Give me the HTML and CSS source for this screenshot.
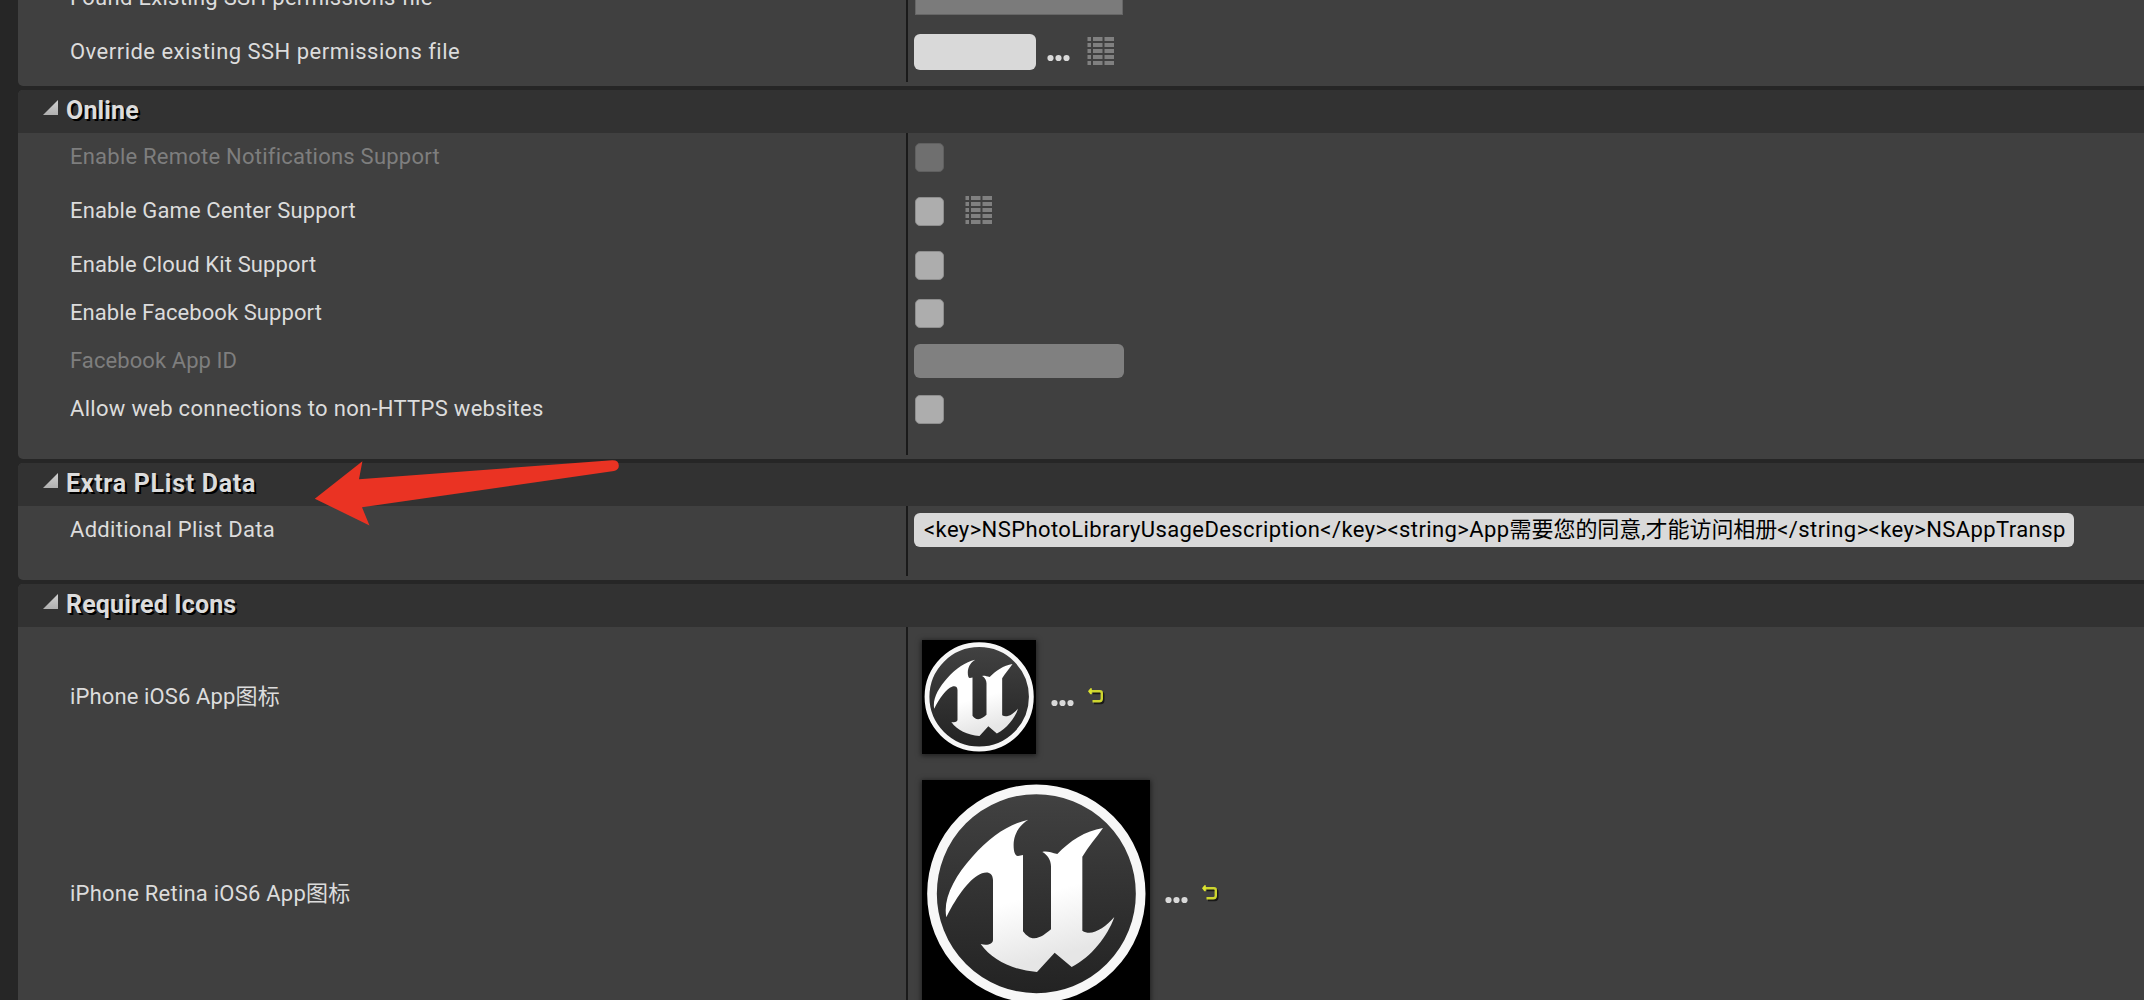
FILE: index.html
```html
<!DOCTYPE html>
<html lang="zh-CN">
<head>
<meta charset="utf-8">
<title>Project Settings - iOS</title>
<link rel="stylesheet" href="styles.css">
</head>
<body>
<svg class="defs" width="0" height="0" aria-hidden="true">
  <defs>
    <linearGradient id="disc" x1="0" y1="0" x2="0" y2="1"><stop offset="0" stop-color="#424242"/><stop offset="1" stop-color="#222"/></linearGradient>
    <linearGradient id="metal" x1="0" y1="0" x2="0.3" y2="1"><stop offset="0.6" stop-color="#fff"/><stop offset="1" stop-color="#e6e6e6"/></linearGradient>
    <linearGradient id="tri" x1="0" y1="0" x2="0" y2="1"><stop offset="0" stop-color="#d0d0d0"/><stop offset="1" stop-color="#b0b0b0"/></linearGradient>
  </defs>
  <symbol id="unreal" viewBox="0 0 684 684">
    <rect width="684" height="684" fill="#000"/>
    <circle cx="343" cy="341" r="313" fill="url(#disc)" stroke="#f7f7f7" stroke-width="29"/>
    <path fill="url(#metal)" d="M319 119C282 142 276 174 275 190C274 210 278 229 288 228L303 225V454C313 467 322 475 337 475C356 474 370 462 387 448V259C387 240 376 224 361 216C373 212 388 218 406 222C443 183 489 153 543 144C524 172 500 198 481 230V452C508 470 546 446 577 411C556 470 508 531 449 561L398 518L345 576C272 570 211 541 176 492C196 497 213 492 213 479V300C212 278 197 274 180 280C146 292 106 346 73 412C62 354 99 288 151 230C207 168 260 133 319 119Z"/>
  </symbol>
  <symbol id="list" viewBox="0 0 28 30">
    <g fill="#808080">
      <path d="M.5 1h3.5v4H.5zM6 1h9.5v4H6zM17.5 1H27v4h-9.5z"/>
      <path d="M.5 7h3.5v4H.5zM6 7h9.5v4H6zM17.5 7H27v4h-9.5z"/>
      <path d="M.5 13h3.5v4H.5zM6 13h9.5v4H6zM17.5 13H27v4h-9.5z"/>
      <path d="M.5 19h3.5v4H.5zM6 19h9.5v4H6zM17.5 19H27v4h-9.5z"/>
      <path d="M.5 25h3.5v4H.5zM6 25h9.5v4H6zM17.5 25H27v4h-9.5z"/>
    </g>
  </symbol>
  <symbol id="dots" viewBox="0 0 24 8">
    <g fill="#d9d9d9"><circle cx="3.5" cy="4" r="3.1"/><circle cx="11.5" cy="4" r="3.1"/><circle cx="19.5" cy="4" r="3.1"/></g>
  </symbol>
  <symbol id="reset" viewBox="0 0 18 18">
    <g fill="none" stroke-width="2.4"><path stroke="#181818" d="M5 5h8.5q1.8 0 1.8 2v5.5q0 2.5-2.5 2.5H6"/><path stroke="#cdd52f" d="M2 3.2h10q1.8 0 1.8 2v5.6q0 2.5-2.5 2.5H4.5"/></g>
    <path fill="#dde52f" d="M0 3.2L2.4.2h1.4v6H2.4z"/>
  </symbol>
  <symbol id="expanded" viewBox="0 0 16 16"><path fill="url(#tri)" d="M15 0v15H0z"/></symbol>
</svg>

<main class="panel">
  <section class="group">
    <div class="body tight">
      <div class="row"><span class="label">Found Existing SSH permissions file</span><div class="value"><span class="readonly"></span></div></div>
      <div class="row tall"><span class="label wide">Override existing SSH permissions file</span><div class="value"><span class="field path"></span><svg class="dots"><use href="#dots"/></svg><svg class="list"><use href="#list"/></svg></div></div>
    </div>
  </section>

  <section class="group">
    <h2 class="head"><svg class="tri"><use href="#expanded"/></svg><span class="title">Online</span></h2>
    <div class="body">
      <div class="row disabled"><span class="label snug">Enable Remote Notifications Support</span><div class="value"><span class="check"></span></div></div>
      <div class="row tall"><span class="label tighter">Enable Game Center Support</span><div class="value"><span class="check"></span><svg class="list near"><use href="#list"/></svg></div></div>
      <div class="row"><span class="label tighter">Enable Cloud Kit Support</span><div class="value"><span class="check"></span></div></div>
      <div class="row"><span class="label tightest">Enable Facebook Support</span><div class="value"><span class="check"></span></div></div>
      <div class="row disabled"><span class="label tightest">Facebook App ID</span><div class="value"><span class="field appid"></span></div></div>
      <div class="row"><span class="label">Allow web connections to non-HTTPS websites</span><div class="value"><span class="check"></span></div></div>
    </div>
  </section>

  <section class="group">
    <h2 class="head"><svg class="tri"><use href="#expanded"/></svg><span class="title spaced">Extra PList Data</span></h2>
    <div class="body">
      <div class="row"><span class="label">Additional Plist Data</span><div class="value"><span class="field plist">&lt;key&gt;NSPhotoLibraryUsageDescription&lt;/key&gt;&lt;string&gt;App<span class="han">需要您的同意,才能访问相册</span>&lt;/string&gt;&lt;key&gt;NSAppTransp</span></div></div>
    </div>
  </section>

  <section class="group">
    <h2 class="head"><svg class="tri"><use href="#expanded"/></svg><span class="title">Required Icons</span></h2>
    <div class="body">
      <div class="row icon-small"><span class="label tighter">iPhone iOS6 App图标</span><div class="value"><svg class="thumb"><use href="#unreal"/></svg><svg class="dots"><use href="#dots"/></svg><svg class="reset"><use href="#reset"/></svg></div></div>
      <div class="row icon-large"><span class="label snug">iPhone Retina iOS6 App图标</span><div class="value"><svg class="thumb"><use href="#unreal"/></svg><svg class="dots"><use href="#dots"/></svg><svg class="reset"><use href="#reset"/></svg></div></div>
    </div>
  </section>
</main>

<svg class="arrow" viewBox="314 458 308 70"><path fill="#ea3323" d="M314.8 498.7L362.4 461.3L359 479.3L612 460.3Q618.7 460 618.8 465.5Q619 470 614 470.9L362 507.3L369.5 525.5Z"/></svg>
</body>
</html>
```
FILE: styles.css
```css
* { box-sizing: border-box; }

body {
  margin: 0;
  height: 1000px;
  overflow: hidden;
  background: #262626;
  color: #dcdcdc;
  font-family: Roboto, "Noto Sans CJK SC", sans-serif;
  font-size: 22px;
  letter-spacing: 0.3px;
}

svg { display: block; flex: none; }
.defs { position: absolute; }

.panel {
  display: flex;
  flex-direction: column;
  gap: 4px;
  margin: -26px 0 0 18px;
}

.group {
  flex: none;
  background: #404040;
  border-radius: 5px 0 0 5px;
  overflow: hidden;
}

.head {
  display: flex;
  align-items: center;
  height: 43px;
  margin: 0;
  padding-left: 25px;
  background: #323232;
  font-size: 25px;
  font-weight: 700;
  letter-spacing: 0.15px;
  text-shadow: 2px 2px 0 #000;
}

.title { margin: -1px 0 0 7px; line-height: 32px; }
.title.spaced { letter-spacing: 0.7px; }
.tri { width: 16px; height: 16px; margin-top: -7px; }

.body {
  padding-bottom: 4px;
  background: linear-gradient(#1a1a1a, #1a1a1a) 888px 0 / 2px calc(100% - 4px) no-repeat;
}
.body::after { content: ""; display: block; height: 22px; }
.body.tight::after { display: none; }

.row {
  display: grid;
  grid-template-columns: 890px 1fr;
  align-items: center;
  height: 48px;
}
.row.tall { height: 60px; }
.row.icon-small { height: 140px; }
.row.icon-large { height: 254px; }

.label {
  padding-left: 52px;
  line-height: 30px;
  white-space: nowrap;
}
.label.wide { letter-spacing: 0.48px; }
.label.snug { letter-spacing: 0.23px; }
.label.tighter { letter-spacing: 0.13px; }
.label.tightest { letter-spacing: 0.08px; }
.disabled .label { color: #7e7e7e; }

.value { display: flex; align-items: center; padding-left: 6px; }

.check {
  width: 29px;
  height: 29px;
  margin-left: 1px;
  border: 1px solid #8e8e8e;
  border-radius: 5px;
  background: #adadad;
}
.disabled .check { background: #6f6f6f; border-color: #606060; }

.field {
  height: 34px;
  border-radius: 6px;
  background: #d9d9d9;
}
.field.path { width: 122px; height: 36px; }
.field.appid { width: 210px; background: #808080; }
.field.plist {
  width: 1160px;
  padding-left: 10px;
  color: #000;
  letter-spacing: 0.41px;
  line-height: 34px;
  white-space: nowrap;
  overflow: hidden;
}
.han { letter-spacing: -0.05px; }
.readonly { width: 208px; height: 33px; margin-left: 1px; background: #7b7b7b; border: 1px solid #666; }

.dots { width: 24px; height: 8px; margin: 12px 0 0 11px; }
.list { width: 28px; height: 30px; margin: -2px 0 0 16px; }
.list.near { margin-left: 21px; }

.thumb { width: 114px; height: 114px; margin-left: 8px; box-shadow: 0 1px 5px 1px rgba(0, 0, 0, 0.5); }
.icon-large .thumb { width: 228px; height: 228px; }
.thumb + .dots { margin-left: 15px; }
.reset { width: 18px; height: 18px; margin: -1px 0 0 13px; }

.arrow {
  position: absolute;
  left: 314px;
  top: 458px;
  width: 308px;
  height: 70px;
}
```
